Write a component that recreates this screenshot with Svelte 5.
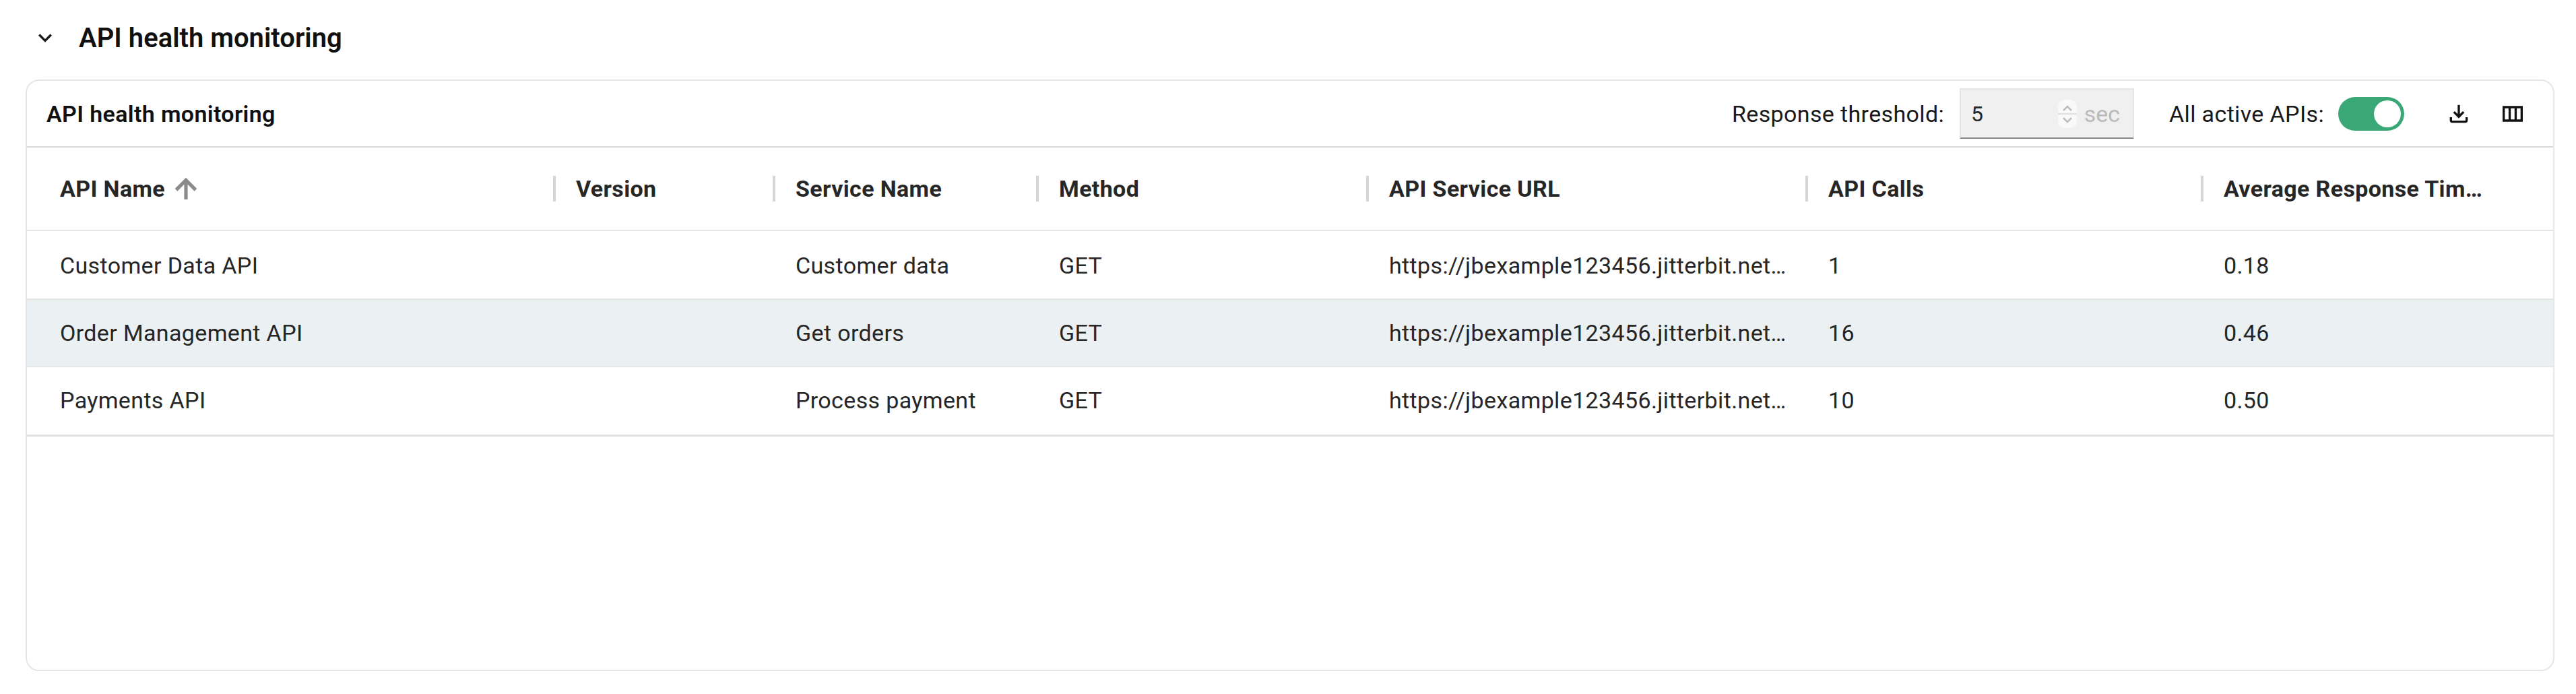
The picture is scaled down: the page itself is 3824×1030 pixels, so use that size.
<script>
  const columns = [
    { label: 'API Name', sorted: true },
    { label: 'Version' },
    { label: 'Service Name' },
    { label: 'Method' },
    { label: 'API Service URL' },
    { label: 'API Calls' },
    { label: 'Average Response Time (sec)' }
  ];

  const url = 'https://jbexample123456.jitterbit.net/app/v1/customers';

  const rows = [
    { name: 'Customer Data API', version: '', service: 'Customer data', method: 'GET', url, calls: 1, time: '0.18' },
    { name: 'Order Management API', version: '', service: 'Get orders', method: 'GET', url, calls: 16, time: '0.46' },
    { name: 'Payments API', version: '', service: 'Process payment', method: 'GET', url, calls: 10, time: '0.50' }
  ];

  let activeOnly = $state(true);
  let hovered = $state(1);
</script>

<section class="panel">
  <header class="section-head">
    <svg class="chevron" viewBox="0 0 24 24"><path d="M7.41 8.59 12 13.17l4.59-4.58L18 10l-6 6-6-6z" /></svg>
    <h1>API health monitoring</h1>
  </header>

  <div class="card">
    <div class="toolbar">
      <h2>API health monitoring</h2>
      <span class="label">Response threshold:</span>
      <div class="threshold">
        <span class="value">5</span>
        <span class="spinner">
          <svg viewBox="0 0 28 42">
            <path d="M8 16l6-6 6 6" />
            <path d="M8 27l6 6 6-6" />
            <line x1="0" y1="21" x2="28" y2="21" />
          </svg>
        </span>
        <span class="unit">sec</span>
      </div>
      <span class="label active-label">All active APIs:</span>
      <button class="toggle" class:on={activeOnly} aria-label="All active APIs" onclick={() => (activeOnly = !activeOnly)}>
        <span class="thumb"></span>
      </button>
      <svg class="tool download" viewBox="0 0 24 24"><path d="M18 15v3H6v-3H4v3c0 1.1.9 2 2 2h12c1.1 0 2-.9 2-2v-3h-2zm-1-4l-1.41-1.41L13 12.17V4h-2v8.17L8.41 9.59 7 11l5 5 5-5z" /></svg>
      <svg class="tool" viewBox="0 0 24 24"><path d="M3 5v14h18V5H3zm5.33 12H5V7h3.33v10zm5.34 0h-3.33V7h3.33v10zM19 17h-3.33V7H19v10z" /></svg>
    </div>

    <div class="grid head">
      {#each columns as col}
        <div class="th">
          <span class="th-text">{col.label}</span>
          {#if col.sorted}
            <svg class="sort" viewBox="0 0 24 24"><path d="M4 12l1.41 1.41L11 7.83V20h2V7.83l5.58 5.59L20 12l-8-8-8 8z" /></svg>
          {/if}
        </div>
      {/each}
    </div>

    <div class="body">
      {#each rows as row, i}
        <div class="grid row" class:hover={hovered === i} role="row" tabindex="-1" onmouseenter={() => (hovered = i)}>
          <div class="td">{row.name}</div>
          <div class="td">{row.version}</div>
          <div class="td">{row.service}</div>
          <div class="td">{row.method}</div>
          <div class="td">{row.url}</div>
          <div class="td">{row.calls}</div>
          <div class="td">{row.time}</div>
        </div>
      {/each}
    </div>
  </div>
</section>

<style>
  :global(body) {
    margin: 0;
    background: #fff;
    font-family: Roboto, "Liberation Sans", sans-serif;
    color: #262626;
  }

  .panel {
    padding: 0 32px 0 38px;
  }

  .section-head {
    display: flex;
    align-items: center;
    height: 118px;
    padding-left: 9px;
    box-sizing: border-box;
    padding-bottom: 6px;
  }

  .chevron {
    width: 40px;
    height: 40px;
    fill: #1a1a1a;
  }

  h1 {
    margin: 0 0 0 30px;
    font-size: 40px;
    font-weight: 600;
    color: #111;
  }

  .card {
    height: 878px;
    box-sizing: border-box;
    border: 2px solid #e6e6e6;
    border-radius: 20px;
    background: #fff;
  }

  .toolbar {
    display: flex;
    align-items: center;
    height: 97px;
    padding: 0 40px 0 29px;
    border-bottom: 2px solid #d9d9d9;
  }

  h2 {
    margin: 0 auto 0 0;
    font-size: 34px;
    font-weight: 600;
    letter-spacing: 0.36px;
    color: #111;
  }

  .label {
    font-size: 34px;
    letter-spacing: 0.36px;
    color: #1a1a1a;
  }

  .threshold {
    display: flex;
    align-items: center;
    box-sizing: border-box;
    width: 259px;
    height: 75px;
    margin-left: 23px;
    padding: 0 19px 0 15px;
    background: #f0f0f0;
    border: 2px solid #e6e6e6;
    border-bottom-color: #888;
    font-size: 32px;
  }

  .value {
    flex: 1;
    color: #262626;
  }

  .spinner {
    width: 28px;
    height: 42px;
    background: #f9f9f9;
    border-radius: 10px;
  }

  .spinner svg {
    display: block;
    fill: none;
    stroke: #bdbdbd;
    stroke-width: 2.5;
  }

  .spinner line {
    stroke: #e3e3e3;
  }

  .unit {
    margin-left: 11px;
    font-size: 34px;
    color: #bbb;
  }

  .active-label {
    margin-left: 52px;
  }

  .toggle {
    display: flex;
    align-items: center;
    width: 98px;
    height: 50px;
    margin-left: 21px;
    padding: 0 5px;
    border: none;
    border-radius: 25px;
    background: #bdbdbd;
    box-sizing: border-box;
  }

  .toggle.on {
    background: #3aa876;
    justify-content: flex-end;
  }

  .thumb {
    width: 40px;
    height: 40px;
    border-radius: 50%;
    background: #fff;
  }

  .tool {
    width: 40px;
    height: 40px;
    fill: #111;
    flex: none;
    margin-left: 40px;
  }

  .download {
    margin-left: 61px;
  }

  .grid {
    display: grid;
    grid-template-columns: 781px 326px 391px 490px 652px 587px 1fr;
  }

  .head {
    height: 124px;
    box-sizing: border-box;
    border-bottom: 2px solid #e6e6e6;
    align-items: center;
    font-size: 34px;
    font-weight: 700;
    letter-spacing: 0.36px;
  }

  .th {
    display: flex;
    align-items: center;
    height: 38px;
    padding: 0 30px;
    border-left: 4px solid #d6d6d6;
    min-width: 0;
  }

  .th:first-child {
    border-left: none;
    padding-left: 49px;
  }

  .th:last-child {
    padding-right: 100px;
  }

  .th-text {
    white-space: nowrap;
    overflow: hidden;
    text-overflow: ellipsis;
  }

  .sort {
    width: 46px;
    height: 46px;
    margin-left: 8px;
    fill: #8a8a8a;
    stroke: #8a8a8a;
    stroke-width: 0.7;
    flex: none;
  }

  .body {
    padding-top: 2px;
    border-bottom: 3px solid #e2e2e2;
  }

  .row {
    height: 100px;
    box-sizing: border-box;
    align-items: center;
    font-size: 34px;
    letter-spacing: 0.36px;
    border-bottom: 2px solid #e6e6e6;
  }

  .row:last-child {
    border-bottom-color: transparent;
  }

  .row.hover {
    background: #ebf0f2;
  }

  .td {
    padding: 0 28px 0 34px;
    white-space: nowrap;
    overflow: hidden;
    text-overflow: ellipsis;
    min-width: 0;
  }

  .td:first-child {
    padding-left: 49px;
  }
</style>
